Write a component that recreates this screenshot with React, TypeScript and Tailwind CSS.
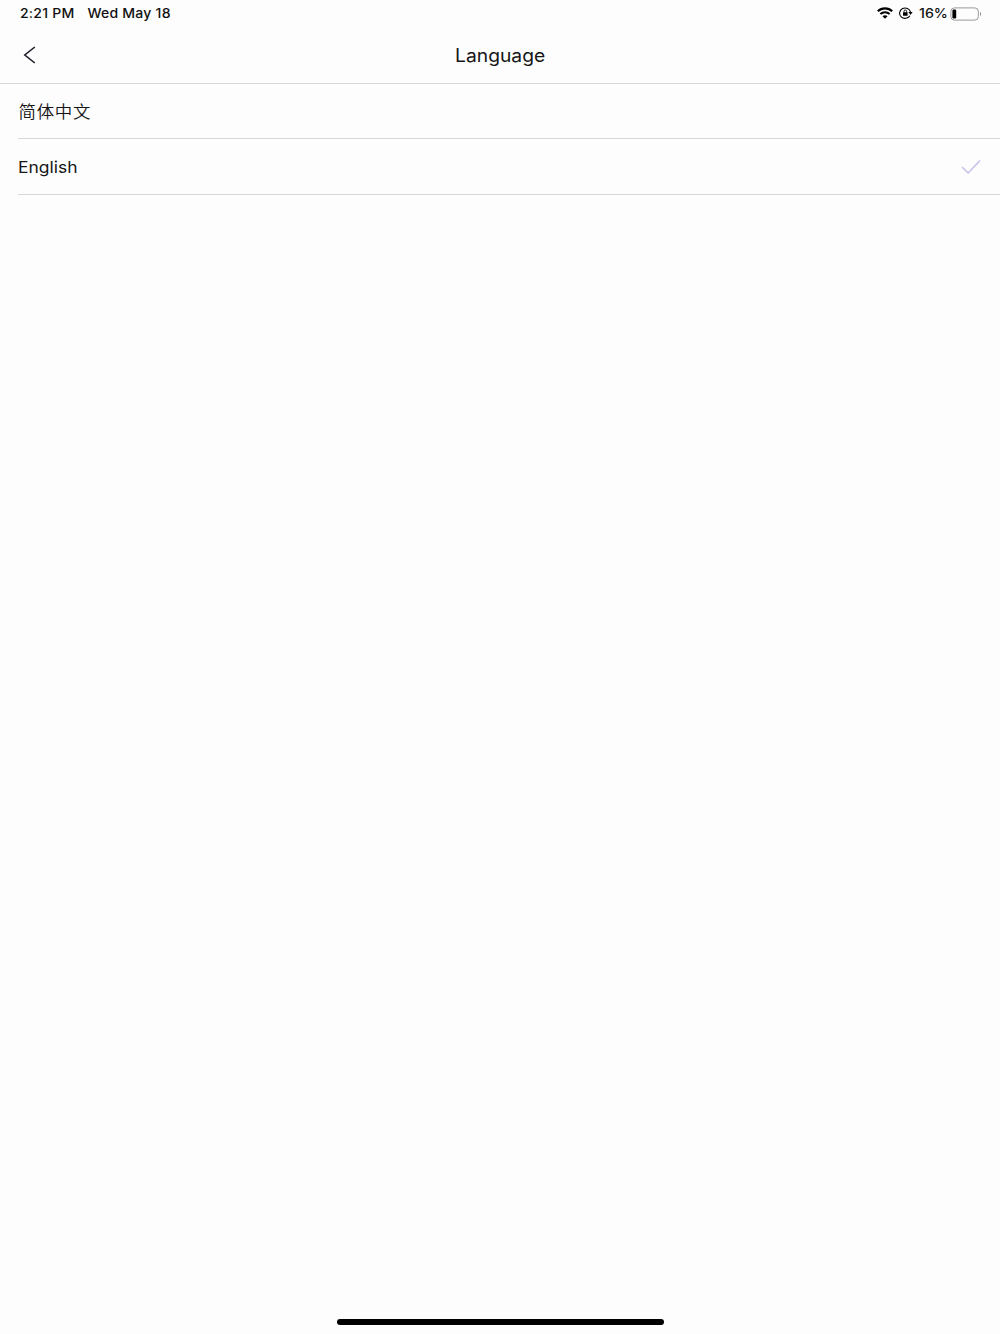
import { useState } from 'react';
import { clsx } from 'clsx';

interface Language {
  code: string;
  label: string;
}

const LANGUAGES: Language[] = [
  { code: 'zh', label: '简体中文' },
  { code: 'en', label: 'English' },
];

function WifiIcon() {
  return (
    <svg width="16" height="12" viewBox="0 0 16 12" fill="none" stroke="#000" strokeWidth="2.1">
      <path d="M0.8 4.3C4.8 0.4 11.2 0.4 15.2 4.3" />
      <path d="M3.4 7C6 4.6 10 4.6 12.6 7" />
      <path d="M8 11.8L5.5 9.3C6.9 8 9.1 8 10.5 9.3Z" fill="#000" stroke="none" />
    </svg>
  );
}

function RotationLockIcon() {
  return (
    <svg width="14" height="12" viewBox="0 0 14 12" fill="none" stroke="#000">
      <path d="M10.9 8.7A5.5 5.2 0 1 1 11.5 5.2" strokeWidth="1.1" />
      <path d="M9.4 5H13.6L11.5 7.9Z" fill="#000" stroke="none" />
      <rect x="4" y="5.2" width="4.6" height="3.5" rx="0.5" fill="#000" stroke="none" />
      <path d="M5 5.5V4.3A1.3 1.3 0 0 1 7.6 4.3V5.5" strokeWidth="0.9" />
    </svg>
  );
}

function BatteryIcon() {
  return (
    <svg width="32" height="14" viewBox="0 0 32 14" fill="none">
      <rect x="0.9" y="0.9" width="27.4" height="12.2" rx="3.4" stroke="#999" />
      <rect x="2.4" y="2.6" width="3.8" height="8.8" rx="1.2" fill="#000" />
      <path d="M30 4.8C31.5 5.4 31.5 8.6 30 9.2Z" fill="#999" />
    </svg>
  );
}

function StatusBar() {
  return (
    <div className="flex h-[27px] items-center justify-between pl-[19.5px] pr-[18px] text-[13px] font-medium leading-none text-[#111]">
      <div className="flex origin-left scale-x-[1.08] gap-[12px] tracking-[0.2px]">
        <span>2:21 PM</span>
        <span>Wed May 18</span>
      </div>
      <div className="flex items-center">
        <span className="pb-px">
          <WifiIcon />
        </span>
        <span className="ml-1.5 pb-px">
          <RotationLockIcon />
        </span>
        <span className="ml-[6px] mr-[3px] w-[28px]">
          <span className="inline-block origin-left scale-x-[1.09]">16%</span>
        </span>
        <BatteryIcon />
      </div>
    </div>
  );
}

export default function App() {
  const [selected, setSelected] = useState('en');

  return (
    <div className="flex h-[1334px] flex-col bg-[#fdfdfd] font-[Inter,'Noto_Sans_CJK_SC',sans-serif] text-[#161616]">
      <StatusBar />

      <header className="grid h-[57px] grid-cols-[1fr_auto_1fr] items-center border-b border-[#d8d8d8]">
        <button type="button" aria-label="Back" className="ml-[22px] w-4">
          <svg width="16" height="20" viewBox="0 0 16 20" fill="none" stroke="#1d1d2b" strokeWidth="1.6">
            <path d="M12.8 2L2.8 10L12.8 18" />
          </svg>
        </button>
        <h1 className="scale-x-[1.07] pt-0.5 text-[18px] leading-6">Language</h1>
      </header>

      <ul className="pl-[18px]">
        {LANGUAGES.map((language) => (
          <li key={language.code} className="h-14 border-b border-[#d8d8d8] first:h-[55px]">
            <button
              type="button"
              onClick={() => setSelected(language.code)}
              className="flex h-full w-full items-center justify-between pr-[19px] text-left text-[16.5px]"
            >
              <span
                className={clsx(
                  'origin-left scale-x-[1.06]',
                  language.code === 'zh' ? 'pl-[0.5px] pt-0.5 font-[350] tracking-[0.6px]' : 'pt-px',
                )}
              >
                {language.label}
              </span>
              {selected === language.code && (
                <svg width="20" height="16" viewBox="0 0 20 16" fill="none" stroke="#c3c0ea" strokeWidth="1.5">
                  <path d="M1 8L7.2 14L19 1.6" />
                </svg>
              )}
            </button>
          </li>
        ))}
      </ul>

      <div className="mx-auto mb-[9px] mt-auto h-[6px] w-[327px] rounded-full bg-black" />
    </div>
  );
}
